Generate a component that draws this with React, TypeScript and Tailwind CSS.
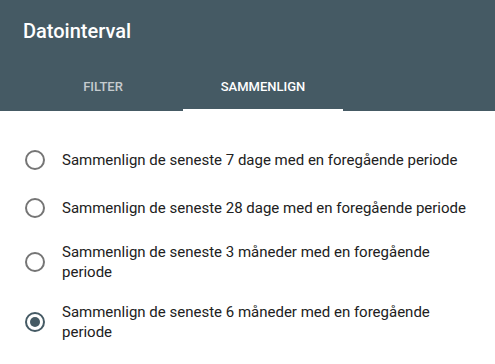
import React from "react";

const options = [
  "Sammenlign de seneste 7 dage med en foregående periode",
  "Sammenlign de seneste 28 dage med en foregående periode",
  "Sammenlign de seneste 3 måneder med en foregående periode",
  "Sammenlign de seneste 6 måneder med en foregående periode",
];

export default function App() {
  const selected = 3;
  return (
    <div className="w-[495px] h-[364px] bg-white overflow-hidden" style={{ fontFamily: "Roboto, 'Noto Sans', sans-serif" }}>
      <div className="bg-[#455a64]">
        <div className="h-[62px] flex items-center px-[23px] text-white text-[20px] font-medium">Datointerval</div>
        <div className="h-[49px] flex pl-[23px]">
          <div className="w-[160px] flex items-center justify-center text-[13px] font-medium uppercase text-white/70">Filter</div>
          <div className="w-[160px] flex items-center justify-center text-[13px] font-medium uppercase text-white relative">
            Sammenlign
            <div className="absolute left-0 right-0 bottom-0 h-[2px] bg-white" />
          </div>
        </div>
      </div>
      <div className="pt-[25px] pr-[24px]">
        {options.map((o, i) => (
          <div key={i} className="min-h-[48px] py-[10px] flex items-center pl-[25px] gap-[17px]">
            <div
              className={
                "w-[20px] h-[20px] shrink-0 rounded-full border-2 flex items-center justify-center " +
                (i === selected ? "border-[#455a64]" : "border-[#757575]")
              }
            >
              {i === selected && <div className="w-[10px] h-[10px] rounded-full bg-[#455a64]" />}
            </div>
            <div className="text-[15px] leading-[20px] text-[#212121]">{o}</div>
          </div>
        ))}
      </div>
    </div>
  );
}
